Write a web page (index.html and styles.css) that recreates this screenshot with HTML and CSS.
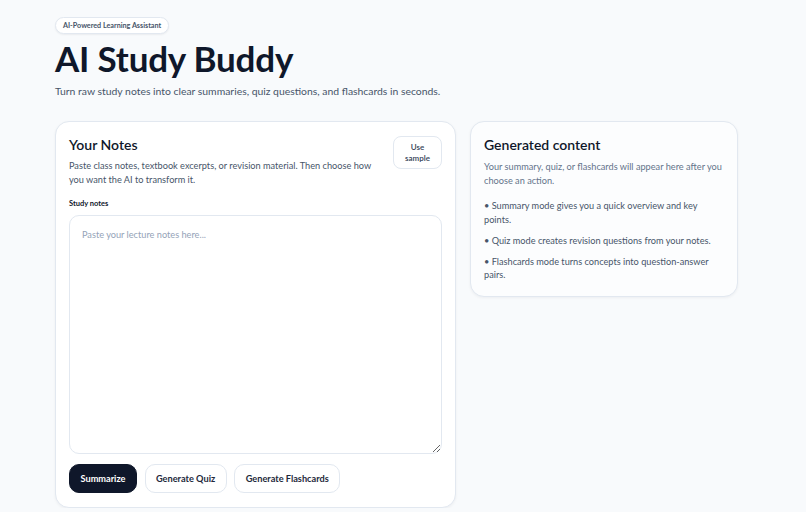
FILE: index.html
```html
<!DOCTYPE html>
<html lang="en">
<head>
<meta charset="utf-8">
<title>AI Study Buddy</title>
<link rel="stylesheet" href="styles.css">
</head>
<body>
<main class="page">
  <header class="hero">
    <span class="badge">AI-Powered Learning Assistant</span>
    <h1 class="title">AI Study Buddy</h1>
    <p class="subtitle">Turn raw study notes into clear summaries, quiz questions, and flashcards in seconds.</p>
  </header>
  <section class="grid">
    <div class="card notes">
      <div class="notes-head">
        <div class="notes-intro">
          <h2 class="card-title">Your Notes</h2>
          <p class="card-text">Paste class notes, textbook excerpts, or revision material. Then choose how you want the AI to transform it.</p>
        </div>
        <button class="btn-sample">Use sample</button>
      </div>
      <label class="label" for="notes">Study notes</label>
      <textarea id="notes" class="textarea" placeholder="Paste your lecture notes here..."></textarea>
      <div class="actions">
        <button class="btn btn-primary">Summarize</button>
        <button class="btn">Generate Quiz</button>
        <button class="btn">Generate Flashcards</button>
      </div>
    </div>
    <div class="card output">
      <h2 class="card-title">Generated content</h2>
      <p class="card-text">Your summary, quiz, or flashcards will appear here after you choose an action.</p>
      <ul class="tips">
        <li>• Summary mode gives you a quick overview and key points.</li>
        <li>• Quiz mode creates revision questions from your notes.</li>
        <li>• Flashcards mode turns concepts into question-answer pairs.</li>
      </ul>
    </div>
  </section>
</main>
</body>
</html>
```
FILE: styles.css
```css
* { box-sizing: border-box; }
html, body { margin: 0; padding: 0; }
body {
  background: #f8fafc;
  font-family: Lato, "Noto Sans", sans-serif;
  color: #0f172a;
}
.page {
  width: 683px;
  margin-left: 55px;
  padding-top: 17px;
}
.hero { display: flex; flex-direction: column; align-items: flex-start; }
.badge {
  display: inline-block;
  font-size: 7.2px;
  font-weight: 700;
  color: #475569;
  background: #fff;
  border: 1px solid #e2e8f0;
  border-radius: 999px;
  padding: 3px 7px;
  line-height: 9px;
  box-shadow: 0 1px 2px rgba(15,23,42,0.06);
}
.title {
  margin: 2px 0 0 0;
  font-size: 35px;
  font-weight: 700;
  line-height: 44px;
  letter-spacing: -0.2px;
  color: #0f172a;
}
.subtitle {
  margin: 4px 0 0 0;
  font-size: 10.4px;
  line-height: 14px;
  color: #475569;
}
.grid {
  margin-top: 23px;
  display: grid;
  grid-template-columns: 401px 268px;
  gap: 14px;
  align-items: start;
}
.card {
  background: #fff;
  border: 1px solid #e2e8f0;
  border-radius: 14px;
  box-shadow: 0 1px 3px rgba(15,23,42,0.05);
}
.notes { padding: 14px 13px; }
.output { padding: 14px 13px; background: #fcfdfe; }
.notes-head { display: flex; justify-content: space-between; align-items: flex-start; gap: 16px; }
.card-title {
  margin: 0;
  font-size: 14px;
  font-weight: 600;
  line-height: 18px;
  color: #0f172a;
}
.card-text {
  margin: 5px 0 0 0;
  font-size: 9.2px;
  line-height: 14px;
  color: #475569;
}
.output .card-text { line-height: 13.5px; margin-top: 6px; color: #64748b; }
.notes-intro { flex: 1; }
.btn-sample {
  width: 49px;
  height: 33px;
  font-family: inherit;
  font-size: 8px;
  font-weight: 600;
  line-height: 11px;
  color: #334155;
  background: #fff;
  border: 1px solid #e2e8f0;
  border-radius: 8px;
  padding: 0 4px;
  text-align: center;
}
.label {
  display: block;
  margin-top: 12px;
  font-size: 7.5px;
  font-weight: 700;
  color: #0f172a;
  line-height: 10px;
}
.textarea {
  display: block;
  width: 100%;
  height: 239px;
  margin-top: 6px;
  padding: 12px;
  font-family: inherit;
  font-size: 9.2px;
  line-height: 14px;
  color: #0f172a;
  background: #fff;
  border: 1px solid #e2e8f0;
  border-radius: 10px;
  resize: vertical;
}
.textarea::placeholder { color: #94a3b8; }
.actions { display: flex; gap: 7.5px; margin-top: 10px; }
.btn {
  height: 29px;
  padding: 0 10.5px;
  font-family: inherit;
  font-size: 9.2px;
  font-weight: 700;
  color: #1e293b;
  background: #fff;
  border: 1px solid #e2e8f0;
  border-radius: 10px;
}
.btn-primary {
  background: #0f172a;
  border-color: #0f172a;
  color: #fff;
}
.tips { list-style: none; margin: 12px 0 0 0; padding: 0; }
.tips li {
  font-size: 9.2px;
  line-height: 13.5px;
  color: #475569;
  margin-bottom: 7.5px;
}
.tips li:last-child { margin-bottom: 0; }
```
